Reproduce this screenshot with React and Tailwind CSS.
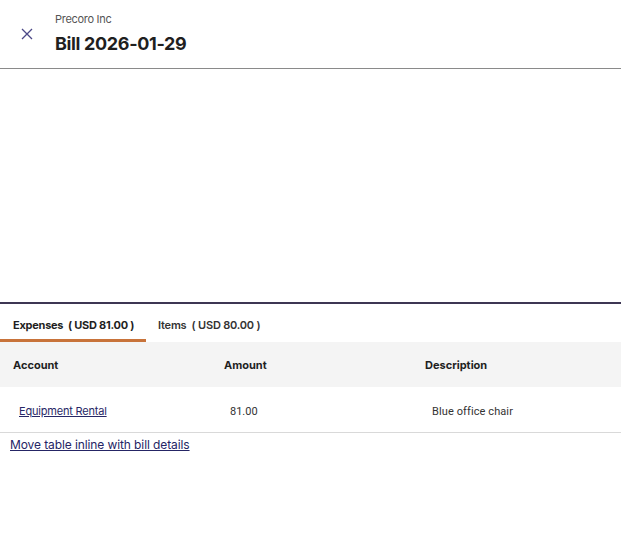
export default function App() {
  return (
    <div className="w-[621px] h-[552px] bg-white font-['Inter',sans-serif] text-[#1f1f1f] flex flex-col">
      <header className="h-[69px] border-b border-[#8a8a8a] flex items-start shrink-0">
        <button className="w-[12px] ml-[21px] mt-[28px] h-[12px] flex items-center justify-center text-[#4b4887]">
          <svg width="12" height="12" viewBox="0 0 12 12" fill="none" stroke="currentColor" strokeWidth="1.3">
            <path d="M1 1L11 11M11 1L1 11" />
          </svg>
        </button>
        <div className="ml-[22px] mt-[12px] flex flex-col">
          <span className="text-[11px] leading-[14px] text-[#555] tracking-[-0.3px]">Precoro Inc</span>
          <span className="text-[18px] leading-[24px] font-bold mt-[6px] tracking-[-0.35px]">Bill 2026-01-29</span>
        </div>
      </header>
      <div className="h-[233px] shrink-0" />
      <div className="border-t-2 border-[#3d3653]">
        <div className="flex h-[38px] items-end">
          <div className="w-[146px] h-[38px] flex items-center pl-[13px] border-b-[3px] border-[#c8733a] text-[11px] font-bold pt-[7px] whitespace-pre tracking-[-0.25px]">
            Expenses  ( USD 81.00 )
          </div>
          <div className="h-[38px] flex items-center pl-[12px] text-[11px] font-semibold text-[#333] whitespace-pre pt-[4px] tracking-[-0.2px]">
            Items  ( USD 80.00 )
          </div>
        </div>
        <div className="grid grid-cols-[211px_201px_1fr] bg-[#f4f4f4] h-[45px] items-center text-[11px] font-bold pt-[1px]">
          <div className="pl-[13px]">Account</div>
          <div className="pl-[13px]">Amount</div>
          <div className="pl-[13px]">Description</div>
        </div>
        <div className="grid grid-cols-[211px_201px_1fr] h-[46px] items-center text-[11px] border-b border-[#d9d9d9] font-['Roboto',sans-serif] pt-[5px]">
          <div className="pl-[19px]"><a className="underline text-[#272766] font-['Inter',sans-serif] tracking-[-0.2px]" href="#">Equipment Rental</a></div>
          <div className="pl-[19px] text-[#333]">81.00</div>
          <div className="pl-[20px] text-[#333] tracking-[0.1px]">Blue office chair</div>
        </div>
        <div className="pl-[10px] pt-[3px] text-[12px] leading-[18px]">
          <a href="#" className="underline text-[#252565] tracking-[-0.1px]">Move table inline with bill details</a>
        </div>
      </div>
    </div>
  );
}
